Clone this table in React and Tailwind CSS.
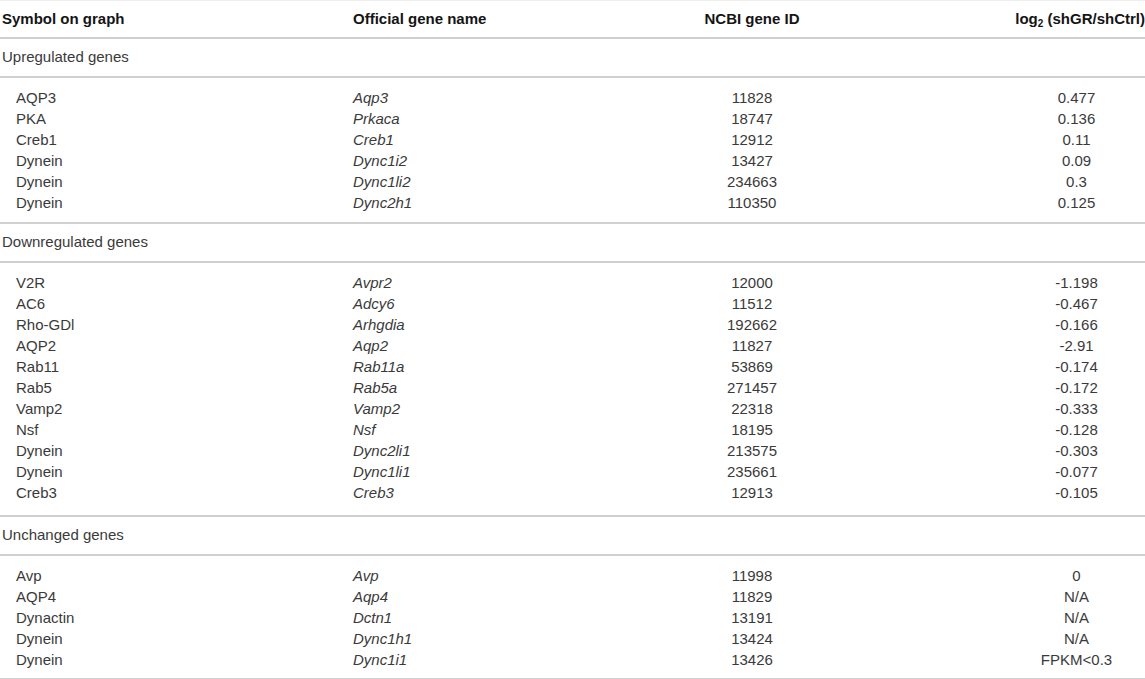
import React from 'react'

const sections = [
  {
    title: 'Upregulated genes',
    pad: 'pt-[9px] pb-[9px]',
    rows: [
      ['AQP3', 'Aqp3', '11828', '0.477'],
      ['PKA', 'Prkaca', '18747', '0.136'],
      ['Creb1', 'Creb1', '12912', '0.11'],
      ['Dynein', 'Dync1i2', '13427', '0.09'],
      ['Dynein', 'Dync1li2', '234663', '0.3'],
      ['Dynein', 'Dync2h1', '110350', '0.125'],
    ],
  },
  {
    title: 'Downregulated genes',
    pad: 'pt-[9px] pb-[12px]',
    rows: [
      ['V2R', 'Avpr2', '12000', '-1.198'],
      ['AC6', 'Adcy6', '11512', '-0.467'],
      ['Rho-GDl', 'Arhgdia', '192662', '-0.166'],
      ['AQP2', 'Aqp2', '11827', '-2.91'],
      ['Rab11', 'Rab11a', '53869', '-0.174'],
      ['Rab5', 'Rab5a', '271457', '-0.172'],
      ['Vamp2', 'Vamp2', '22318', '-0.333'],
      ['Nsf', 'Nsf', '18195', '-0.128'],
      ['Dynein', 'Dync2li1', '213575', '-0.303'],
      ['Dynein', 'Dync1li1', '235661', '-0.077'],
      ['Creb3', 'Creb3', '12913', '-0.105'],
    ],
  },
  {
    title: 'Unchanged genes',
    pad: 'pt-[9px] pb-[8px]',
    rows: [
      ['Avp', 'Avp', '11998', '0'],
      ['AQP4', 'Aqp4', '11829', 'N/A'],
      ['Dynactin', 'Dctn1', '13191', 'N/A'],
      ['Dynein', 'Dync1h1', '13424', 'N/A'],
      ['Dynein', 'Dync1i1', '13426', 'FPKM<0.3'],
    ],
  },
]

const grid = 'grid grid-cols-[353px_310px_178px_167px_137px]'

function App() {
  return (
    <div className="w-[1145px] h-[679px] bg-white font-['Liberation_Sans',Arial,sans-serif] text-[15px] text-[#3a3a3a] overflow-hidden">
      {/* header */}
      <div className={`${grid} h-[39px] items-center border-t border-b-2 border-t-[#eee] border-b-[#d0d0d0] font-bold text-[#141414]`}>
        <div className="pl-[2px]">Symbol on graph</div>
        <div>Official gene name</div>
        <div className="text-center">NCBI gene ID</div>
        <div />
        <div className="text-right whitespace-nowrap">
          log<sub className="text-[10px] align-baseline relative top-[3px]">2</sub> (shGR/shCtrl)
        </div>
      </div>

      {sections.map((s) => (
        <div key={s.title}>
          <div className="h-[39px] flex items-center pl-[2px] border-b-2 border-[#d0d0d0]">{s.title}</div>
          <div className={`${s.pad} border-b-2 border-[#d0d0d0]`}>
            {s.rows.map((r, i) => (
              <div key={i} className={`${grid} h-[21px] items-center`}>
                <div className="pl-[16px]">{r[0]}</div>
                <div className="italic">{r[1]}</div>
                <div className="text-center">{r[2]}</div>
                <div />
                <div className="text-center">{r[3]}</div>
              </div>
            ))}
          </div>
        </div>
      ))}
    </div>
  )
}

export default App
